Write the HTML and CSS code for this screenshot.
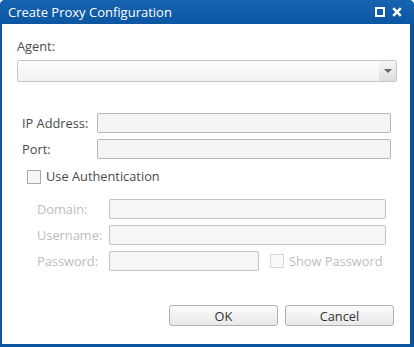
FILE: index.html
```html
<!DOCTYPE html>
<html lang="en">
<head>
    <meta charset="UTF-8">
    <title>Create Proxy Configuration</title>
    <link rel="stylesheet" href="styles.css">
</head>
<body>
    <div class="window">
        <div class="titlebar">
            <span class="title">Create Proxy Configuration</span>
            <div class="controls">
                <svg width="10" height="10" viewBox="0 0 10 10"><rect x="1" y="1" width="8" height="8" fill="none" stroke="#fff" stroke-width="2"/></svg>
                <svg width="10" height="10" viewBox="0 0 10 10"><path d="M1.2 1.2 L8.8 8.8 M8.8 1.2 L1.2 8.8" stroke="#fff" stroke-width="2.4"/></svg>
            </div>
        </div>
        <div class="content">
            <label class="agent-label">Agent:</label>
            <div class="select">
                <span class="select-arrow"></span>
            </div>

            <div class="form-grid main-grid">
                <label>IP Address:</label>
                <input type="text" class="field">
                <label>Port:</label>
                <input type="text" class="field">
            </div>

            <div class="check-row">
                <span class="checkbox"></span>
                <span>Use Authentication</span>
            </div>

            <div class="form-grid auth-grid">
                <label>Domain:</label>
                <input type="text" class="field" disabled>
                <label>Username:</label>
                <input type="text" class="field" disabled>
                <label>Password:</label>
                <div class="password-row">
                    <input type="password" class="field pass-field" disabled>
                    <div class="check-row disabled">
                        <span class="checkbox"></span>
                        <span>Show Password</span>
                    </div>
                </div>
            </div>

            <div class="buttons">
                <button class="btn">OK</button>
                <button class="btn">Cancel</button>
            </div>
        </div>
    </div>
</body>
</html>
```

FILE: styles.css
```css
body {
    margin: 0;
    padding: 0;
    font-family: 'Open Sans', 'Noto Sans', sans-serif;
    font-size: 12.8px;
    color: #4a4a4a;
    background: #ffffff;
}
.window {
    width: 414px;
    height: 347px;
    box-sizing: border-box;
    background: #0c54a0;
    border-radius: 5px 5px 0 0;
    padding: 0 4px 3px 2px;
    display: flex;
    flex-direction: column;
}
.titlebar {
    height: 24px;
    display: flex;
    align-items: center;
    justify-content: space-between;
    padding: 0 12px 0 8px;
    background: linear-gradient(#1764b0, #0c56a2);
    margin: 0 -4px 0 -2px;
    border-radius: 5px 5px 0 0;
}
.title {
    color: #ffffff;
    font-size: 13px;
}
.controls {
    display: flex;
    gap: 7px;
    align-items: center;
}
.content {
    flex: 1;
    background: #ffffff;
    padding: 15px 13px 0 15px;
    display: flex;
    flex-direction: column;
}
.agent-label {
    display: block;
    line-height: 15px;
    margin-bottom: 6px;
}
.select {
    height: 22px;
    box-sizing: border-box;
    border: 1px solid #c6c6c6;
    border-radius: 2px;
    background: linear-gradient(#fdfdfd, #f2f2f2);
    display: flex;
    justify-content: flex-end;
}
.select-arrow {
    width: 17px;
    background: linear-gradient(#f5f5f5, #dedede);
    position: relative;
}
.select-arrow::after {
    content: '';
    position: absolute;
    left: 5px;
    top: 8px;
    border-left: 4px solid transparent;
    border-right: 4px solid transparent;
    border-top: 4px solid #666;
}
.form-grid {
    display: grid;
    align-items: center;
    row-gap: 6px;
}
.form-grid label {
    line-height: 15px;
}
.main-grid {
    grid-template-columns: 75px 1fr;
    margin: 31px 6px 0 5px;
}
.auth-grid {
    grid-template-columns: 72px 1fr;
    margin: 15px 11px 0 20px;
    color: #bdbdbd;
}
.field {
    display: block;
    height: 20px;
    box-sizing: border-box;
    border: 1px solid #b8b8b8;
    border-radius: 2px;
    background: #f5f5f5;
    margin: 0;
    padding: 0 4px;
    font: inherit;
}
.field:disabled {
    border-color: #c4c4c4;
    background: #f6f6f6;
}
.password-row {
    display: flex;
    align-items: center;
    gap: 11px;
}
.pass-field {
    width: 150px;
}
.check-row {
    display: flex;
    align-items: center;
    gap: 5px;
    line-height: 15px;
}
.content > .check-row {
    margin: 10px 0 0 10px;
}
.checkbox {
    width: 14px;
    height: 14px;
    box-sizing: border-box;
    border: 1px solid #aaaaaa;
    background: #f7f7f7;
}
.check-row.disabled .checkbox {
    border-color: #d6d6d6;
    background: #fafafa;
}
.buttons {
    margin: auto 3px 18px 0;
    display: flex;
    justify-content: flex-end;
    gap: 7px;
}
.btn {
    width: 109px;
    height: 21px;
    box-sizing: border-box;
    border: 1px solid #b0b0b0;
    border-radius: 3px;
    background: linear-gradient(#fbfbfb, #e9e9e9);
    color: #333;
    font: inherit;
    padding: 0;
}
```
